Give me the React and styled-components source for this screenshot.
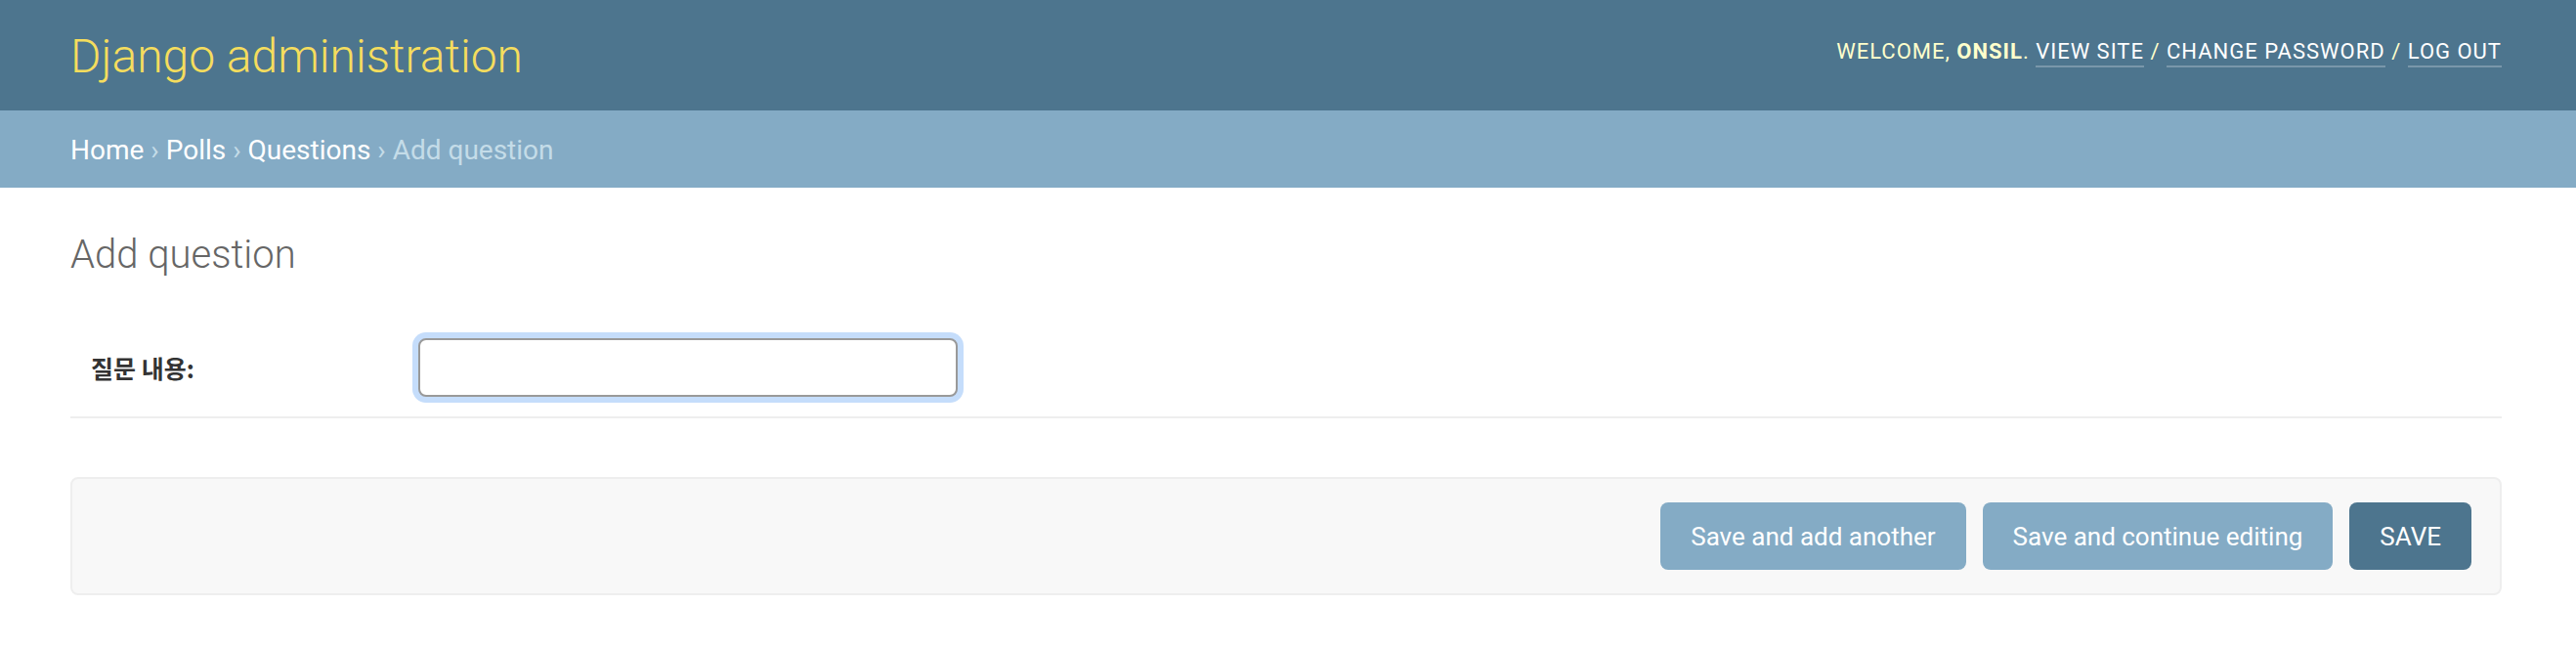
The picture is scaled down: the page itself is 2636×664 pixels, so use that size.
import React from "react";
import styled, { createGlobalStyle } from "styled-components";

const Global = createGlobalStyle`
  html, body { margin: 0; padding: 0; background: #fff; }
  body { font-family: Roboto, "Noto Sans", "Noto Sans CJK KR", sans-serif; color: #333; }
`;

const Header = styled.header`
  height: 113px;
  box-sizing: border-box;
  padding: 0 76px 0 72px;
  background: #4d758e;
  display: flex;
  align-items: center;
  justify-content: space-between;
`;

const Branding = styled.h1`
  margin: 0;
  padding-top: 3px;
  font-size: 48px;
  font-weight: 300;
  color: #f5dd5d;
  line-height: 56px;
`;

const UserTools = styled.div`
  font-size: 22px;
  letter-spacing: 1px;
  text-transform: uppercase;
  color: #ffffcc;
  line-height: 30px;
  margin-top: -8px;
`;

const UserLink = styled.a`
  color: #fff;
  text-decoration: none;
  border-bottom: 2px solid rgba(255, 255, 255, 0.25);
  padding-bottom: 2px;
`;

const Breadcrumbs = styled.nav`
  height: 79px;
  box-sizing: border-box;
  padding: 21px 72px 19px;
  background: #84abc5;
  font-size: 28px;
  line-height: 39px;
  color: #c4dce8;
`;

const Crumb = styled.a`
  color: #fff;
  text-decoration: none;
`;

const Content = styled.main`
  padding: 45px 76px 40px 72px;
`;

const Title = styled.h1`
  margin: 0 0 41px;
  font-size: 40px;
  line-height: 48px;
  font-weight: 300;
  color: #666;
`;

const FormRow = styled.div`
  display: grid;
  grid-template-columns: 335px 1fr;
  align-items: center;
  padding: 20px 0 20px 21px;
  border-bottom: 2px solid #eee;
`;

const Label = styled.label`
  font-family: "Noto Sans CJK KR", Roboto, sans-serif;
  font-size: 25px;
  font-weight: 700;
  color: #333;
`;

const TextInput = styled.input`
  width: 552px;
  height: 60px;
  box-sizing: border-box;
  border: 2px solid #999;
  border-radius: 8px;
  outline: none;
  box-shadow: 0 0 0 6px #c5ddfb;
  padding: 10px;
  font-size: 26px;
  font-family: Roboto, sans-serif;
`;

const SubmitRow = styled.div`
  margin-top: 60px;
  height: 121px;
  box-sizing: border-box;
  padding: 0 29px;
  background: #f8f8f8;
  border: 2px solid #eee;
  border-radius: 8px;
  display: flex;
  align-items: center;
  justify-content: flex-end;
  gap: 17px;
`;

const Button = styled.button`
  height: 69px;
  box-sizing: border-box;
  padding: 0 31px;
  border: none;
  border-radius: 8px;
  background: ${(p) => (p.$primary ? "#4d758e" : "#84abc5")};
  color: #fff;
  font-family: Roboto, sans-serif;
  font-size: 26px;
  font-weight: 400;
  cursor: pointer;
`;

export default function App() {
  return (
    <>
      <Global />
      <Header>
        <Branding>Django administration</Branding>
        <UserTools>
          Welcome, <strong>onsil</strong>. <UserLink href="#">View site</UserLink> /{" "}
          <UserLink href="#">Change password</UserLink> / <UserLink href="#">Log out</UserLink>
        </UserTools>
      </Header>
      <Breadcrumbs>
        <Crumb href="#">Home</Crumb> › <Crumb href="#">Polls</Crumb> ›{" "}
        <Crumb href="#">Questions</Crumb> › Add question
      </Breadcrumbs>
      <Content>
        <Title>Add question</Title>
        <FormRow>
          <Label htmlFor="q">질문 내용:</Label>
          <TextInput id="q" type="text" />
        </FormRow>
        <SubmitRow>
          <Button>Save and add another</Button>
          <Button>Save and continue editing</Button>
          <Button $primary>SAVE</Button>
        </SubmitRow>
      </Content>
    </>
  );
}
